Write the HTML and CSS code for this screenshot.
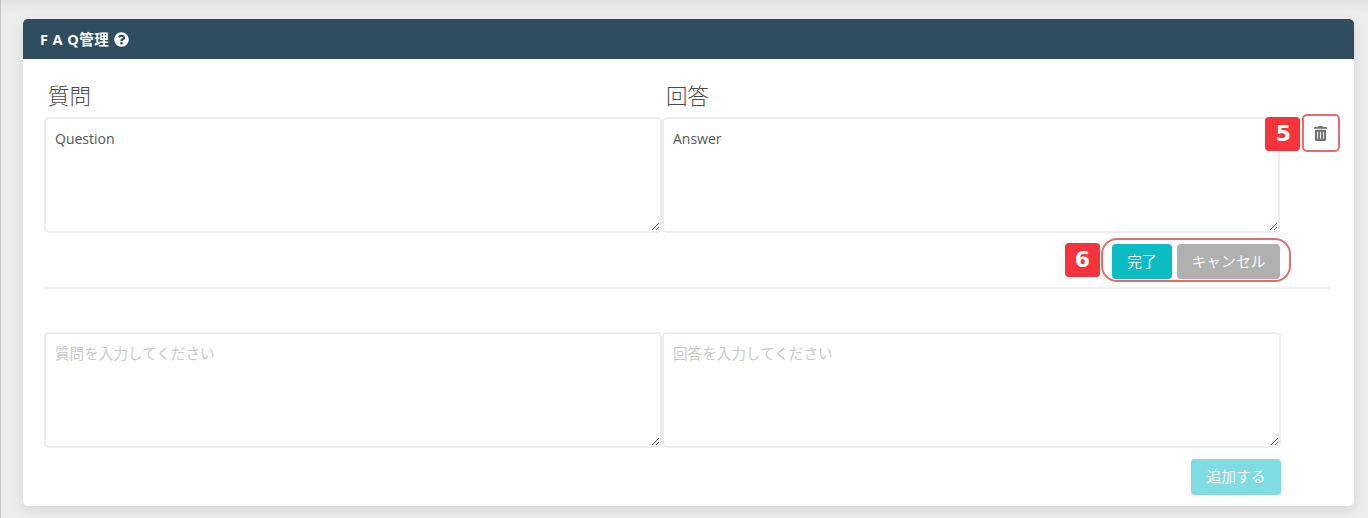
FILE: index.html
```html
<!DOCTYPE html>
<html lang="ja">
<head>
<meta charset="utf-8">
<title>FAQ管理</title>
<link rel="stylesheet" href="styles.css">
</head>
<body>
<main class="page">
  <section class="card">
    <header class="card-head">
      <h1 class="card-title">F A Q管理</h1>
      <svg class="help" viewBox="0 0 512 512" aria-hidden="true"><path fill="#fff" d="M504 256c0 137-111 248-248 248S8 393 8 256 119 8 256 8s248 111 248 248zM262.700 90c-54.500 0-89.300 23-116.500 63.800-3.500 5.300-2.400 12.400 2.700 16.300l34.700 26.300c5.200 3.900 12.600 3 16.700-2.100 17.900-22.700 30.100-35.800 57.300-35.800 20.400 0 45.700 13.100 45.700 32.900 0 15-12.400 22.700-32.500 34-23.500 13.200-54.600 29.600-54.600 70.600V300c0 6.600 5.400 12 12 12h56c6.600 0 12-5.400 12-12v-1.300c0-28.400 83-29.600 83-106.700 0-58-60.200-102-116.500-102zM256 338c-25.300 0-45.900 20.600-45.900 45.900 0 25.300 20.600 45.900 45.900 45.900s45.900-20.600 45.900-45.900c0-25.300-20.600-45.900-45.900-45.900z"/></svg>
    </header>
    <div class="card-body">
      <div class="faq-item">
        <div class="labels">
          <div class="label">質問</div>
          <div class="label label-answer">回答</div>
        </div>
        <div class="fields">
          <textarea class="field">Question</textarea>
          <textarea class="field">Answer</textarea>
          <div class="trash-wrap">
            <span class="badge badge-five">5</span>
            <span class="trash-box">
              <svg class="trash" viewBox="0 0 448 512" aria-hidden="true"><path fill="#737373" d="M32 464a48 48 0 0 0 48 48h288a48 48 0 0 0 48-48V128H32zm272-256a16 16 0 0 1 32 0v224a16 16 0 0 1-32 0zm-96 0a16 16 0 0 1 32 0v224a16 16 0 0 1-32 0zm-96 0a16 16 0 0 1 32 0v224a16 16 0 0 1-32 0zM432 32H312l-9.400-18.700A24 24 0 0 0 281.100 0H166.800a23.700 23.700 0 0 0-21.400 13.300L136 32H16A16 16 0 0 0 0 48v32a16 16 0 0 0 16 16h416a16 16 0 0 0 16-16V48a16 16 0 0 0-16-16z"/></svg>
            </span>
          </div>
        </div>
        <div class="actions">
          <div class="action-group">
            <span class="badge badge-six">6</span>
            <span class="action-ring"></span>
            <button class="btn btn-done" type="button">完了</button>
            <button class="btn btn-cancel" type="button">キャンセル</button>
          </div>
        </div>
      </div>
      <div class="faq-new">
        <div class="fields fields-new">
          <textarea class="field field-new" placeholder="質問を入力してください"></textarea>
          <textarea class="field field-new" placeholder="回答を入力してください"></textarea>
        </div>
        <div class="add-row">
          <button class="btn btn-add" type="button">追加する</button>
        </div>
      </div>
    </div>
  </section>
</main>
</body>
</html>
```
FILE: styles.css
```css
* { box-sizing: border-box; }
html, body { margin: 0; height: 518px; overflow: hidden; }
body {
  background: #ececec;
  font-family: "Open Sans", "Noto Sans CJK JP", sans-serif;
  color: #495057;
}
.page {
  height: 518px;
  padding: 19px 14px 0 22px;
  background: linear-gradient(#e2e2e2 0, #ededed 14px);
  border-left: 1px solid #c4c4c4;
}
.card {
  height: 487px;
  background: #fff;
  border-radius: 5px;
  box-shadow: 0 4px 14px rgba(0, 0, 0, .1);
  overflow: hidden;
}
.card-head {
  height: 40px;
  background: #304d60;
  display: flex;
  align-items: center;
  gap: 5px;
  padding-left: 17px;
}
.card-title {
  margin: 0;
  padding-top: 1px;
  font-size: 14.5px;
  font-weight: 700;
  letter-spacing: .45px;
  line-height: 20px;
  color: #fff;
  font-family: "Open Sans", "Noto Sans CJK JP", sans-serif;
}
.help { width: 15px; height: 15px; display: block; }
.card-body {
  padding: 0 23px 0 21px;
}
.faq-item {
  height: 230px;
  border-bottom: 2px solid #f0f1f2;
}
.labels {
  display: flex;
  height: 58px;
  padding-top: 20px;
}
.label {
  width: 618px;
  padding-left: 4px;
  font-size: 21.5px;
  line-height: 32px;
  color: #4a4a4a;
  font-family: "Noto Sans CJK JP", sans-serif;
  font-weight: 300;
}
.fields {
  display: flex;
  align-items: flex-start;
}
.field {
  display: block;
  width: 618px;
  height: 116px;
  padding: 10px 9px;
  margin: 0;
  border: 2px solid #ecedee;
  border-radius: 5px;
  background: #fff;
  font: 14px/20px "Open Sans", "Noto Sans CJK JP", sans-serif;
  color: #555;
  outline: none;
}
.field-new { padding-top: 9px; }
.field::placeholder {
  color: #cacaca;
  opacity: 1;
  font-size: 14.6px;
}
.trash-wrap {
  position: relative;
  flex: 1;
  height: 116px;
}
.trash-box {
  position: absolute;
  left: 22px;
  top: -3px;
  width: 38px;
  height: 38px;
  border: 2px solid #ea6a6c;
  border-radius: 5px;
  display: flex;
  align-items: center;
  justify-content: center;
  padding-right: 2px;
}
.trash { width: 13px; height: 15px; display: block; }
.badge {
  position: absolute;
  display: flex;
  align-items: center;
  justify-content: center;
  width: 35px;
  height: 34px;
  padding-left: 2px;
  background: #f4333a;
  border-radius: 4px;
  color: #fff;
  font: 700 22px/1 "DejaVu Sans", sans-serif;
}
.badge-five { left: -15px; top: 0; }
.badge-six { left: -47px; top: -1px; padding-left: 0; }
.actions {
  display: flex;
  justify-content: flex-end;
  padding: 11px 51px 0 0;
}
.action-group {
  position: relative;
  display: flex;
  gap: 5px;
}
.action-ring {
  position: absolute;
  left: -11px;
  right: -11px;
  top: -6px;
  height: 44px;
  border: 2px solid #ea6a6c;
  border-radius: 16px;
  pointer-events: none;
}
.btn {
  border: 0;
  border-radius: 4px;
  height: 35px;
  padding: 0 0 1px;
  font: 400 14.8px/20px "Noto Sans CJK JP", sans-serif;
  color: #f6f6f6;
}
.btn-done { width: 60px; background: #0cbcc4; }
.btn-cancel { width: 103px; background: #b0b0b0; }
.faq-new { padding-top: 43px; }
.fields-new .field + .field { width: 619px; }
.add-row {
  display: flex;
  justify-content: flex-end;
  padding: 11px 50px 0 0;
}
.btn-add {
  width: 90px;
  height: 36px;
  padding-bottom: 3px;
  background: #7fdce2;
}
```
